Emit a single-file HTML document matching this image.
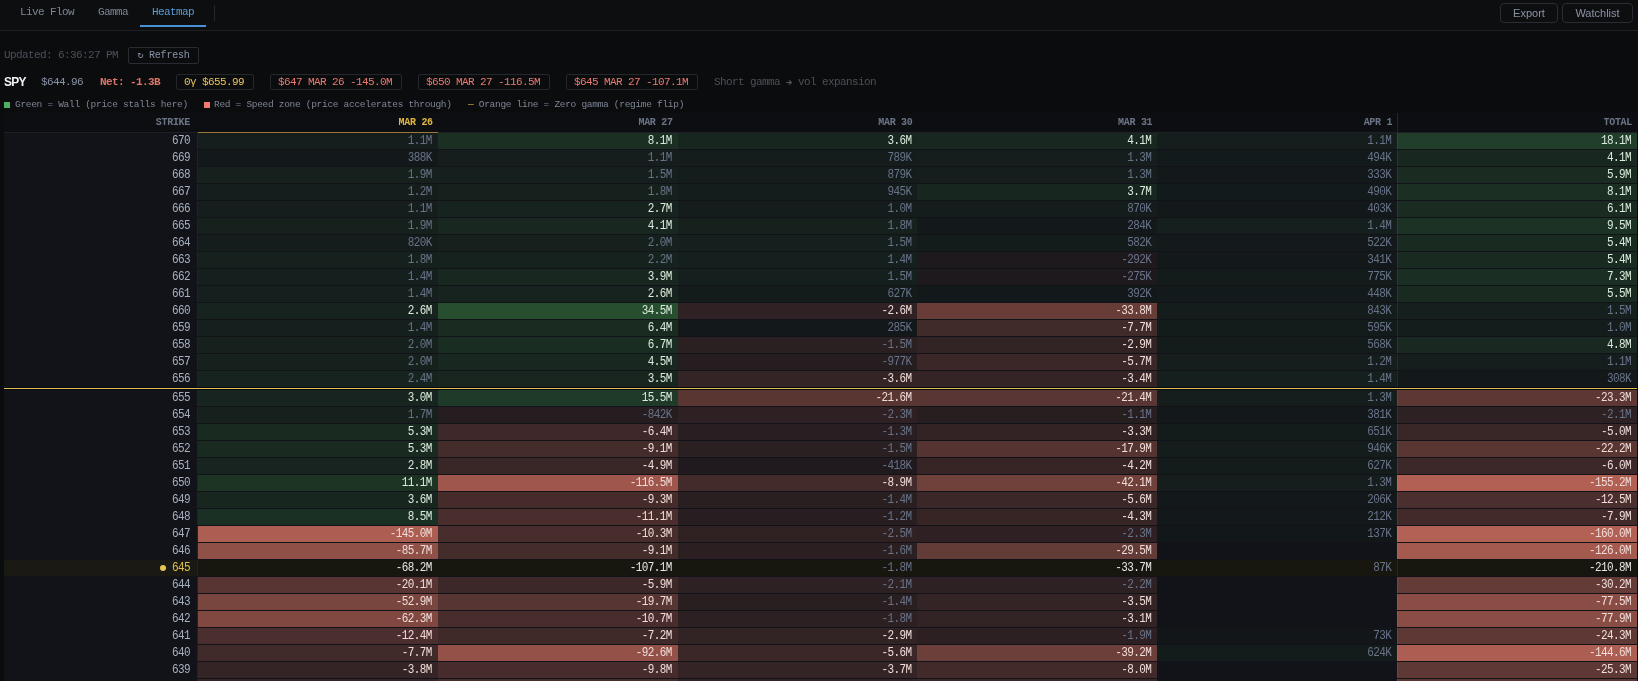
<!DOCTYPE html>
<html><head><meta charset="utf-8">
<style>
*{box-sizing:border-box}
html,body{margin:0;padding:0;background:#0b0c0e;width:1638px;height:681px;overflow:hidden}
body{font-family:"Liberation Mono",monospace;color:#8a93a6;position:relative}
.mono{font-family:"Liberation Mono",monospace;font-size:11px;letter-spacing:-0.6px}
.nav{position:absolute;left:0;top:0;width:1638px;height:31px;border-bottom:1px solid #1f2023;background:#0d0e10}
.tab{position:absolute;top:0;height:30px;line-height:25px;font-size:11px;letter-spacing:-0.6px;color:#7d8595}
.tab.on{color:#5b9bd5}
.tab.on:after{content:"";position:absolute;left:0;right:0;top:25px;height:2px;background:#4a90d9}
.sep{position:absolute;left:214px;top:5px;width:1px;height:16px;background:#24262b}
.btn{position:absolute;top:3px;height:20px;border:1px solid #2a2c32;border-radius:4px;font-family:"Liberation Sans",sans-serif;font-size:11px;color:#8a93a6;line-height:18px;text-align:center}
.upd{position:absolute;left:4px;top:47px;height:17px;line-height:17px;color:#4a505c}
.rbtn{position:absolute;left:128px;top:47px;width:71px;height:17px;border:1px solid #2a2c32;border-radius:2px;line-height:15px;text-align:center;color:#8a93a6;font-size:10px;letter-spacing:-0.2px}
.spy{position:absolute;left:4px;top:74px;height:16px;line-height:16px;font-family:"Liberation Sans",sans-serif;font-weight:bold;font-size:12px;letter-spacing:-0.7px;color:#f0f2f5}
.it{position:absolute;top:74px;height:16px;line-height:16px}
.box{position:absolute;top:74px;height:16px;line-height:14px;border:1px solid #25272c;border-radius:2px;padding:0 7px}
.leg{position:absolute;top:99px;height:12px;line-height:12px;font-size:9.5px;letter-spacing:-0.3px;color:#7d8595}
.sq{position:absolute;top:102px;width:6px;height:6px}
table{position:absolute;left:4px;top:113px;width:1633px;border-collapse:collapse;table-layout:fixed;background:#111318}
.zgl{position:absolute;left:4px;top:388px;width:1633px;height:1px;background:#e0c050}
th{height:19px;font-size:10px;font-weight:bold;letter-spacing:-0.3px;color:#6c7587;text-align:right;padding:0 5px 0 0;border-bottom:1px solid #1e2025;vertical-align:middle;background:#0d0e11}
td{height:17px;padding:0 6px 0 0;text-align:right;border-bottom:1px solid #111318;font-size:11px;letter-spacing:-0.6px;color:#687389;white-space:nowrap;overflow:hidden;line-height:16px}
td.s{background:#111318;color:#a8b0c0;padding-right:8px;box-shadow:inset -1px 0 0 #222328}
td.w{color:#dcebdc}
td.wr{color:#f0dcd8}
td.ww{color:#e6e6e4}
td i{font-style:normal;display:inline-block;position:relative;top:0.5px;transform:scaleY(1.08);transform-origin:50% 75%}
tr.zg td{border-bottom:3px solid #080a12}
#root{position:absolute;left:0;top:0;width:1638px;height:681px;overflow:hidden;will-change:transform;background:#0b0c0e}
</style></head><body><div id="root">
<div class="nav">
<div class="tab" style="left:8px;width:78px;padding-left:12px">Live Flow</div>
<div class="tab" style="left:86px;width:54px;padding-left:12px">Gamma</div>
<div class="tab on" style="left:140px;width:66px;padding-left:12px">Heatmap</div>
<div class="sep"></div>
<div class="btn" style="left:1500px;width:58px">Export</div>
<div class="btn" style="left:1562px;width:71px">Watchlist</div>
</div>
<div class="upd mono">Updated: 6:36:27 PM</div>
<div class="rbtn">&#8635; Refresh</div>
<div class="spy">SPY</div>
<div class="it mono" style="left:41px;color:#8a93a6">$644.96</div>
<div class="it mono" style="left:100px;color:#dc7668;font-weight:bold">Net: -1.3B</div>
<div class="box mono" style="left:176px;width:78px;color:#e8c35a">0&#947; $655.99</div>
<div class="box mono" style="left:270px;width:132px;color:#e87a6e">$647 MAR 26 -145.0M</div>
<div class="box mono" style="left:418px;width:132px;color:#e87a6e">$650 MAR 27 -116.5M</div>
<div class="box mono" style="left:566px;width:132px;color:#e87a6e">$645 MAR 27 -107.1M</div>
<div class="it mono" style="left:714px;color:#4b5059">Short gamma <svg width="6" height="8" viewBox="0 0 6 8" style="vertical-align:-0.5px"><path d="M0.3 4.5H5M3 2.3L5.3 4.5L3 6.7" stroke="#50555e" stroke-width="1.15" fill="none"/></svg> vol expansion</div>
<div class="sq" style="left:4px;background:#4caf62"></div>
<div class="leg" style="left:15px">Green = Wall (price stalls here)</div>
<div class="sq" style="left:204px;background:#f07a70"></div>
<div class="leg" style="left:214px">Red = Speed zone (price accelerates through)</div>
<div class="leg" style="left:468px"><span style="color:#e0b040">&#8212;</span> Orange line = Zero gamma (regime flip)</div>

<table><colgroup><col style="width:194px"><col><col><col><col><col><col></colgroup>
<tr><th style="padding-right:8px">STRIKE</th><th style="color:#e0b840;border-bottom-color:#98793a">MAR 26</th><th>MAR 27</th><th>MAR 30</th><th>MAR 31</th><th>APR 1</th><th style="box-shadow:inset 1px 0 0 #24262a">TOTAL</th></tr>
<tr>
<td class="s"><i>670</i></td>
<td style="background:#151e1c"><i>1.1M</i></td>
<td class="w" style="background:#1b3023"><i>8.1M</i></td>
<td class="w" style="background:#182620"><i>3.6M</i></td>
<td class="w" style="background:#182720"><i>4.1M</i></td>
<td style="background:#151e1c"><i>1.1M</i></td>
<td class="w" style="box-shadow:inset 1px 0 0 rgba(255,255,255,0.07);background:#203e29"><i>18.1M</i></td>
</tr>
<tr>
<td class="s"><i>669</i></td>
<td style="background:#13191a"><i>388K</i></td>
<td style="background:#151e1c"><i>1.1M</i></td>
<td style="background:#141c1c"><i>789K</i></td>
<td style="background:#151e1d"><i>1.3M</i></td>
<td style="background:#131a1b"><i>494K</i></td>
<td class="w" style="box-shadow:inset 1px 0 0 rgba(255,255,255,0.07);background:#182720"><i>4.1M</i></td>
</tr>
<tr>
<td class="s"><i>668</i></td>
<td style="background:#16211d"><i>1.9M</i></td>
<td style="background:#151f1d"><i>1.5M</i></td>
<td style="background:#141c1c"><i>879K</i></td>
<td style="background:#151e1d"><i>1.3M</i></td>
<td style="background:#13191a"><i>333K</i></td>
<td class="w" style="box-shadow:inset 1px 0 0 rgba(255,255,255,0.07);background:#1a2b22"><i>5.9M</i></td>
</tr>
<tr>
<td class="s"><i>667</i></td>
<td style="background:#151e1c"><i>1.2M</i></td>
<td style="background:#16201d"><i>1.8M</i></td>
<td style="background:#141d1c"><i>945K</i></td>
<td class="w" style="background:#182620"><i>3.7M</i></td>
<td style="background:#131a1b"><i>490K</i></td>
<td class="w" style="box-shadow:inset 1px 0 0 rgba(255,255,255,0.07);background:#1b3023"><i>8.1M</i></td>
</tr>
<tr>
<td class="s"><i>666</i></td>
<td style="background:#151e1c"><i>1.1M</i></td>
<td class="w" style="background:#17231e"><i>2.7M</i></td>
<td style="background:#151d1c"><i>1.0M</i></td>
<td style="background:#141c1c"><i>870K</i></td>
<td style="background:#13191b"><i>403K</i></td>
<td class="w" style="box-shadow:inset 1px 0 0 rgba(255,255,255,0.07);background:#1a2c22"><i>6.1M</i></td>
</tr>
<tr>
<td class="s"><i>665</i></td>
<td style="background:#16211d"><i>1.9M</i></td>
<td class="w" style="background:#182720"><i>4.1M</i></td>
<td style="background:#16201d"><i>1.8M</i></td>
<td style="background:#13181a"><i>284K</i></td>
<td style="background:#151f1d"><i>1.4M</i></td>
<td class="w" style="box-shadow:inset 1px 0 0 rgba(255,255,255,0.07);background:#1c3224"><i>9.5M</i></td>
</tr>
<tr>
<td class="s"><i>664</i></td>
<td style="background:#141c1c"><i>820K</i></td>
<td style="background:#16211e"><i>2.0M</i></td>
<td style="background:#151f1d"><i>1.5M</i></td>
<td style="background:#141b1b"><i>582K</i></td>
<td style="background:#141a1b"><i>522K</i></td>
<td class="w" style="box-shadow:inset 1px 0 0 rgba(255,255,255,0.07);background:#192a21"><i>5.4M</i></td>
</tr>
<tr>
<td class="s"><i>663</i></td>
<td style="background:#16201d"><i>1.8M</i></td>
<td style="background:#16221e"><i>2.2M</i></td>
<td style="background:#151f1d"><i>1.4M</i></td>
<td style="background:#1e191d"><i>-292K</i></td>
<td style="background:#13191a"><i>341K</i></td>
<td class="w" style="box-shadow:inset 1px 0 0 rgba(255,255,255,0.07);background:#192a21"><i>5.4M</i></td>
</tr>
<tr>
<td class="s"><i>662</i></td>
<td style="background:#151f1d"><i>1.4M</i></td>
<td class="w" style="background:#182720"><i>3.9M</i></td>
<td style="background:#151f1d"><i>1.5M</i></td>
<td style="background:#1e191d"><i>-275K</i></td>
<td style="background:#141c1b"><i>775K</i></td>
<td class="w" style="box-shadow:inset 1px 0 0 rgba(255,255,255,0.07);background:#1a2e23"><i>7.3M</i></td>
</tr>
<tr>
<td class="s"><i>661</i></td>
<td style="background:#151f1d"><i>1.4M</i></td>
<td class="w" style="background:#17231e"><i>2.6M</i></td>
<td style="background:#141b1b"><i>627K</i></td>
<td style="background:#13191a"><i>392K</i></td>
<td style="background:#131a1b"><i>448K</i></td>
<td class="w" style="box-shadow:inset 1px 0 0 rgba(255,255,255,0.07);background:#192b21"><i>5.5M</i></td>
</tr>
<tr>
<td class="s"><i>660</i></td>
<td class="w" style="background:#17231e"><i>2.6M</i></td>
<td class="w" style="background:#264e2f"><i>34.5M</i></td>
<td class="wr" style="background:#302224"><i>-2.6M</i></td>
<td class="wr" style="background:#683d38"><i>-33.8M</i></td>
<td style="background:#141c1c"><i>843K</i></td>
<td style="box-shadow:inset 1px 0 0 rgba(255,255,255,0.07);background:#151f1d"><i>1.5M</i></td>
</tr>
<tr>
<td class="s"><i>659</i></td>
<td style="background:#151f1d"><i>1.4M</i></td>
<td class="w" style="background:#1a2c22"><i>6.4M</i></td>
<td style="background:#13181a"><i>285K</i></td>
<td class="wr" style="background:#412a2a"><i>-7.7M</i></td>
<td style="background:#141b1b"><i>595K</i></td>
<td style="box-shadow:inset 1px 0 0 rgba(255,255,255,0.07);background:#151d1c"><i>1.0M</i></td>
</tr>
<tr>
<td class="s"><i>658</i></td>
<td style="background:#16211e"><i>2.0M</i></td>
<td class="w" style="background:#1a2d22"><i>6.7M</i></td>
<td style="background:#2a1f21"><i>-1.5M</i></td>
<td class="wr" style="background:#322324"><i>-2.9M</i></td>
<td style="background:#141b1b"><i>568K</i></td>
<td class="w" style="box-shadow:inset 1px 0 0 rgba(255,255,255,0.07);background:#192921"><i>4.8M</i></td>
</tr>
<tr>
<td class="s"><i>657</i></td>
<td style="background:#16211e"><i>2.0M</i></td>
<td class="w" style="background:#182820"><i>4.5M</i></td>
<td style="background:#261d20"><i>-977K</i></td>
<td class="wr" style="background:#3c2728"><i>-5.7M</i></td>
<td style="background:#151e1c"><i>1.2M</i></td>
<td style="box-shadow:inset 1px 0 0 rgba(255,255,255,0.07);background:#151e1c"><i>1.1M</i></td>
</tr>
<tr class="zg">
<td class="s"><i>656</i></td>
<td style="background:#16231e"><i>2.4M</i></td>
<td class="w" style="background:#18261f"><i>3.5M</i></td>
<td class="wr" style="background:#342425"><i>-3.6M</i></td>
<td class="wr" style="background:#342425"><i>-3.4M</i></td>
<td style="background:#151f1d"><i>1.4M</i></td>
<td style="box-shadow:inset 1px 0 0 rgba(255,255,255,0.07);background:#13191a"><i>308K</i></td>
</tr>
<tr>
<td class="s"><i>655</i></td>
<td class="w" style="background:#17241f"><i>3.0M</i></td>
<td class="w" style="background:#1f3a28"><i>15.5M</i></td>
<td class="wr" style="background:#5a3633"><i>-21.6M</i></td>
<td class="wr" style="background:#593633"><i>-21.4M</i></td>
<td style="background:#151e1d"><i>1.3M</i></td>
<td class="wr" style="box-shadow:inset 1px 0 0 rgba(255,255,255,0.07);background:#5c3734"><i>-23.3M</i></td>
</tr>
<tr>
<td class="s"><i>654</i></td>
<td style="background:#16201d"><i>1.7M</i></td>
<td style="background:#251d1f"><i>-842K</i></td>
<td style="background:#2f2123"><i>-2.3M</i></td>
<td style="background:#271e20"><i>-1.1M</i></td>
<td style="background:#13191a"><i>381K</i></td>
<td style="box-shadow:inset 1px 0 0 rgba(255,255,255,0.07);background:#2e2123"><i>-2.1M</i></td>
</tr>
<tr>
<td class="s"><i>653</i></td>
<td class="w" style="background:#192a21"><i>5.3M</i></td>
<td class="wr" style="background:#3e2829"><i>-6.4M</i></td>
<td style="background:#291e21"><i>-1.3M</i></td>
<td class="wr" style="background:#332325"><i>-3.3M</i></td>
<td style="background:#141b1b"><i>651K</i></td>
<td class="wr" style="box-shadow:inset 1px 0 0 rgba(255,255,255,0.07);background:#392627"><i>-5.0M</i></td>
</tr>
<tr>
<td class="s"><i>652</i></td>
<td class="w" style="background:#192a21"><i>5.3M</i></td>
<td class="wr" style="background:#442c2b"><i>-9.1M</i></td>
<td style="background:#2a1f21"><i>-1.5M</i></td>
<td class="wr" style="background:#543331"><i>-17.9M</i></td>
<td style="background:#141d1c"><i>946K</i></td>
<td class="wr" style="box-shadow:inset 1px 0 0 rgba(255,255,255,0.07);background:#5a3633"><i>-22.2M</i></td>
</tr>
<tr>
<td class="s"><i>651</i></td>
<td class="w" style="background:#17241f"><i>2.8M</i></td>
<td class="wr" style="background:#392627"><i>-4.9M</i></td>
<td style="background:#201a1e"><i>-418K</i></td>
<td class="wr" style="background:#372526"><i>-4.2M</i></td>
<td style="background:#141b1b"><i>627K</i></td>
<td class="wr" style="box-shadow:inset 1px 0 0 rgba(255,255,255,0.07);background:#3c2828"><i>-6.0M</i></td>
</tr>
<tr>
<td class="s"><i>650</i></td>
<td class="w" style="background:#1d3425"><i>11.1M</i></td>
<td class="wr" style="background:#9f574d"><i>-116.5M</i></td>
<td class="wr" style="background:#442b2b"><i>-8.9M</i></td>
<td class="wr" style="background:#70413b"><i>-42.1M</i></td>
<td style="background:#151e1d"><i>1.3M</i></td>
<td class="wr" style="box-shadow:inset 1px 0 0 rgba(255,255,255,0.07);background:#b16053"><i>-155.2M</i></td>
</tr>
<tr>
<td class="s"><i>649</i></td>
<td class="w" style="background:#182620"><i>3.6M</i></td>
<td class="wr" style="background:#452c2b"><i>-9.3M</i></td>
<td style="background:#291f21"><i>-1.4M</i></td>
<td class="wr" style="background:#3b2728"><i>-5.6M</i></td>
<td style="background:#13181a"><i>206K</i></td>
<td class="wr" style="box-shadow:inset 1px 0 0 rgba(255,255,255,0.07);background:#4b2f2e"><i>-12.5M</i></td>
</tr>
<tr>
<td class="s"><i>648</i></td>
<td class="w" style="background:#1b3024"><i>8.5M</i></td>
<td class="wr" style="background:#492e2d"><i>-11.1M</i></td>
<td style="background:#281e21"><i>-1.2M</i></td>
<td class="wr" style="background:#372526"><i>-4.3M</i></td>
<td style="background:#13181a"><i>212K</i></td>
<td class="wr" style="box-shadow:inset 1px 0 0 rgba(255,255,255,0.07);background:#422a2a"><i>-7.9M</i></td>
</tr>
<tr>
<td class="s"><i>647</i></td>
<td class="wr" style="background:#ac5e52"><i>-145.0M</i></td>
<td class="wr" style="background:#472d2c"><i>-10.3M</i></td>
<td style="background:#302223"><i>-2.5M</i></td>
<td style="background:#2f2123"><i>-2.3M</i></td>
<td style="background:#121719"><i>137K</i></td>
<td class="wr" style="box-shadow:inset 1px 0 0 rgba(255,255,255,0.07);background:#b36154"><i>-160.0M</i></td>
</tr>
<tr>
<td class="s"><i>646</i></td>
<td class="wr" style="background:#8f5047"><i>-85.7M</i></td>
<td class="wr" style="background:#442c2b"><i>-9.1M</i></td>
<td style="background:#2b1f22"><i>-1.6M</i></td>
<td class="wr" style="background:#633b37"><i>-29.5M</i></td>
<td><i></i></td>
<td class="wr" style="box-shadow:inset 1px 0 0 rgba(255,255,255,0.07);background:#a45a4f"><i>-126.0M</i></td>
</tr>
<tr>
<td class="s" style="background:#1a1913;color:#e0c050"><span style="display:inline-block;width:6px;height:6px;border-radius:50%;background:#e8c450;margin-right:6px;vertical-align:0px"></span><i>645</i></td>
<td class="ww" style="background:#17160f"><i>-68.2M</i></td>
<td class="ww" style="background:#17160f"><i>-107.1M</i></td>
<td style="background:#17160f"><i>-1.8M</i></td>
<td class="ww" style="background:#17160f"><i>-33.7M</i></td>
<td style="background:#17160f"><i>87K</i></td>
<td class="ww" style="box-shadow:inset 1px 0 0 rgba(255,255,255,0.07);background:#17160f"><i>-210.8M</i></td>
</tr>
<tr>
<td class="s"><i>644</i></td>
<td class="wr" style="background:#583532"><i>-20.1M</i></td>
<td class="wr" style="background:#3c2828"><i>-5.9M</i></td>
<td style="background:#2e2123"><i>-2.1M</i></td>
<td style="background:#2e2123"><i>-2.2M</i></td>
<td><i></i></td>
<td class="wr" style="box-shadow:inset 1px 0 0 rgba(255,255,255,0.07);background:#643b37"><i>-30.2M</i></td>
</tr>
<tr>
<td class="s"><i>643</i></td>
<td class="wr" style="background:#79453f"><i>-52.9M</i></td>
<td class="wr" style="background:#573532"><i>-19.7M</i></td>
<td style="background:#291f21"><i>-1.4M</i></td>
<td class="wr" style="background:#342425"><i>-3.5M</i></td>
<td><i></i></td>
<td class="wr" style="box-shadow:inset 1px 0 0 rgba(255,255,255,0.07);background:#8a4d45"><i>-77.5M</i></td>
</tr>
<tr>
<td class="s"><i>642</i></td>
<td class="wr" style="background:#804841"><i>-62.3M</i></td>
<td class="wr" style="background:#482d2c"><i>-10.7M</i></td>
<td style="background:#2c2022"><i>-1.8M</i></td>
<td class="wr" style="background:#322324"><i>-3.1M</i></td>
<td><i></i></td>
<td class="wr" style="box-shadow:inset 1px 0 0 rgba(255,255,255,0.07);background:#8a4d45"><i>-77.9M</i></td>
</tr>
<tr>
<td class="s"><i>641</i></td>
<td class="wr" style="background:#4b2f2e"><i>-12.4M</i></td>
<td class="wr" style="background:#402929"><i>-7.2M</i></td>
<td class="wr" style="background:#322324"><i>-2.9M</i></td>
<td style="background:#2c2022"><i>-1.9M</i></td>
<td style="background:#121619"><i>73K</i></td>
<td class="wr" style="box-shadow:inset 1px 0 0 rgba(255,255,255,0.07);background:#5d3834"><i>-24.3M</i></td>
</tr>
<tr>
<td class="s"><i>640</i></td>
<td class="wr" style="background:#412a2a"><i>-7.7M</i></td>
<td class="wr" style="background:#935148"><i>-92.6M</i></td>
<td class="wr" style="background:#3b2728"><i>-5.6M</i></td>
<td class="wr" style="background:#6d3f3a"><i>-39.2M</i></td>
<td style="background:#141b1b"><i>624K</i></td>
<td class="wr" style="box-shadow:inset 1px 0 0 rgba(255,255,255,0.07);background:#ac5e52"><i>-144.6M</i></td>
</tr>
<tr>
<td class="s"><i>639</i></td>
<td class="wr" style="background:#352425"><i>-3.8M</i></td>
<td class="wr" style="background:#462c2c"><i>-9.8M</i></td>
<td class="wr" style="background:#352425"><i>-3.7M</i></td>
<td class="wr" style="background:#422a2a"><i>-8.0M</i></td>
<td><i></i></td>
<td class="wr" style="box-shadow:inset 1px 0 0 rgba(255,255,255,0.07);background:#5e3835"><i>-25.3M</i></td>
</tr>
<tr>
<td class="s"><i>638</i></td>
<td class="wr" style="background:#362526"><i>-4.0M</i></td>
<td class="wr" style="background:#462d2c"><i>-10.0M</i></td>
<td class="wr" style="background:#322324"><i>-3.0M</i></td>
<td class="wr" style="background:#392627"><i>-5.0M</i></td>
<td><i></i></td>
<td class="wr" style="box-shadow:inset 1px 0 0 rgba(255,255,255,0.07);background:#5a3633"><i>-22.0M</i></td>
</tr>
</table><div class="zgl"></div></div></body></html>
